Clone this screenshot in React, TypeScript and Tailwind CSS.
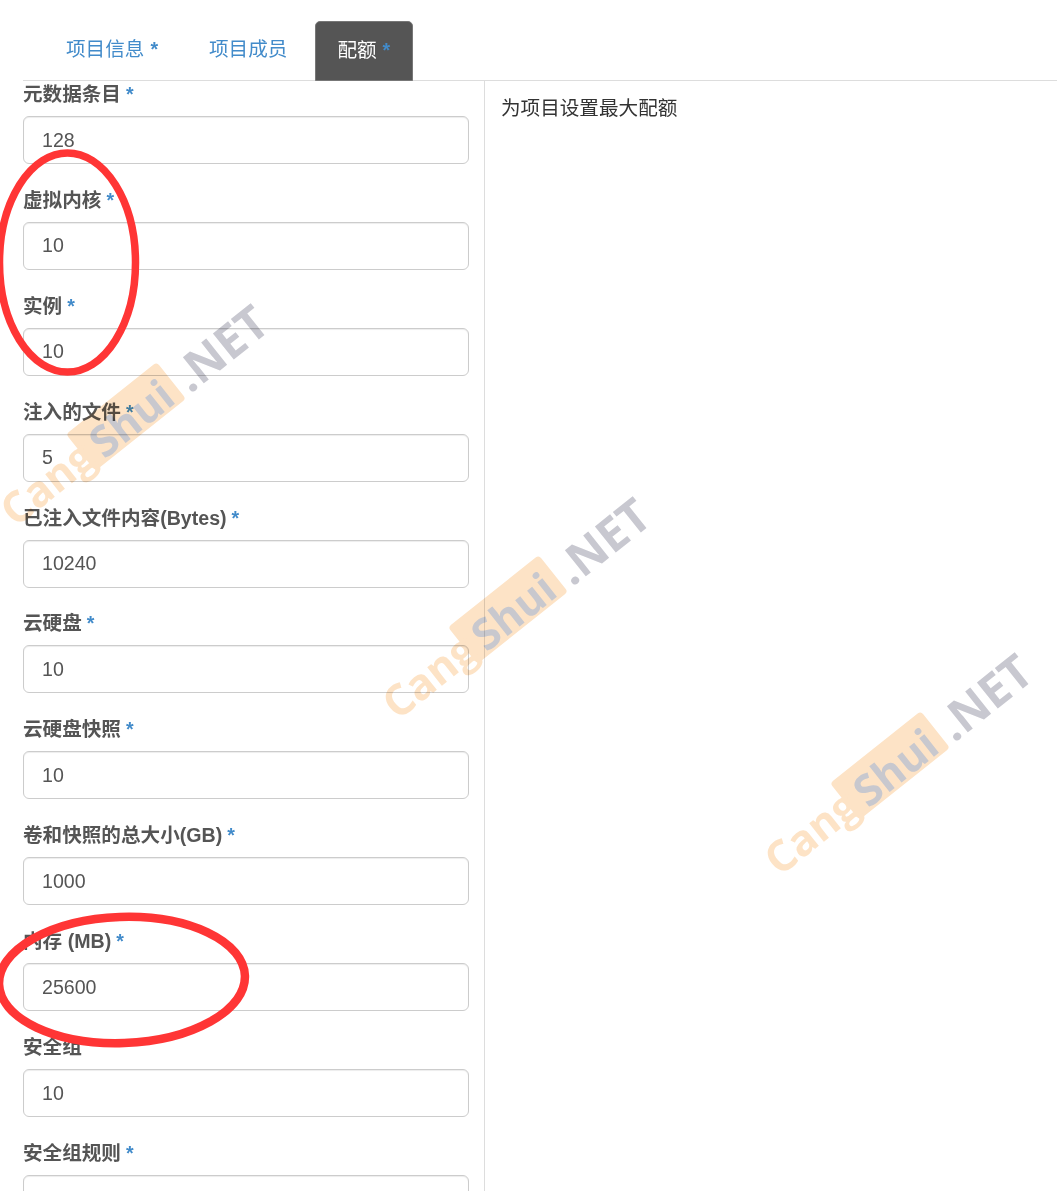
const fields = [
  { label: "元数据条目", value: "128", star: true },
  { label: "虚拟内核", value: "10", star: true },
  { label: "实例", value: "10", star: true },
  { label: "注入的文件", value: "5", star: true },
  { label: "已注入文件内容(Bytes)", value: "10240", star: true },
  { label: "云硬盘", value: "10", star: true },
  { label: "云硬盘快照", value: "10", star: true },
  { label: "卷和快照的总大小(GB)", value: "1000", star: true },
  { label: "内存 (MB)", value: "25600", star: true },
  { label: "安全组", value: "10", star: false },
  { label: "安全组规则", value: "100", star: true },
];

const Star = ({ gap = "ml-[5px]" }: { gap?: string }) => (
  <span className={`${gap} font-bold text-[#428bca]`}>*</span>
);

const Watermark = ({ className }: { className: string }) => (
  <div
    className={`pointer-events-none absolute flex h-[47px] w-[340px] -rotate-[38.5deg] items-center whitespace-nowrap font-['Open_Sans',sans-serif] text-[43px] font-bold mix-blend-multiply ${className}`}
  >
    <span className="flex w-[112px] translate-x-[8px] justify-end pt-[6px] text-[#fde3c6]">Cang</span>
    <span className="flex h-[47px] w-[116px] items-center justify-center rounded-[4px] bg-[#fde3c6] pl-[6px] pt-[10px] text-[#c8c8ce]">Shui</span>
    <span className="w-[112px] pl-[6px] pt-[10px] text-[47px] text-[#c8c8d0]">.NET</span>
  </div>
);

const App: React.FC = () => {
  return (
    <div className="relative h-[1191px] w-[1057px] overflow-hidden bg-white font-['Liberation_Sans','Noto_Sans_CJK_SC',sans-serif] text-[19.6px] text-[#333]">
      {/* tabs */}
      <div className="ml-[23px] flex h-[81px] items-end border-b border-[#ddd] pl-[20px]">
        <a className="mr-[5px] flex h-[60px] items-center px-[23px] text-[#428bca]">
          项目信息<Star gap="ml-[6px]" />
        </a>
        <a className="mr-[5px] flex h-[60px] items-center px-[23px] text-[#428bca]">项目成员</a>
        <a className="-mb-px flex h-[60px] items-center rounded-t-[5px] border border-[#777] bg-[#555] pl-[21px] pr-[22px] text-white">
          配额<Star gap="ml-[6px]" />
        </a>
      </div>

      <div className="flex">
        <div className="w-[485px] border-r border-[#ddd] pl-[23px] pr-[15px]">
          {fields.map((f) => (
            <div key={f.label} className="mb-[22.9px]">
              <label className="mb-[7px] block h-[28px] leading-[26px] font-bold text-[#555]">
                {f.label}
                {f.star && <Star />}
              </label>
              <input
                readOnly
                value={f.value}
                className="block h-[48px] w-[446px] rounded-[6px] border border-[#ccc] bg-white px-[18px] text-[#555] shadow-[inset_0_1px_1px_rgba(0,0,0,0.075)] outline-none"
              />
            </div>
          ))}
        </div>
        <div className="pl-[16px] pt-[13px] leading-[28px]">为项目设置最大配额</div>
      </div>

      <Watermark className="left-[-44px] top-[393px]" />
      <Watermark className="left-[338px] top-[586px]" />
      <Watermark className="left-[720px] top-[742px]" />

      {/* red marker circles drawn over the screenshot */}
      <svg className="absolute left-0 top-0" width="260" height="1060" fill="none" stroke="#ff3535">
        <ellipse cx="67.5" cy="262.5" rx="68" ry="109.5" strokeWidth="7.5" />
        <ellipse cx="122" cy="980" rx="123" ry="63" strokeWidth="8.5" transform="rotate(-2 122 980)" />
      </svg>
    </div>
  );
};

export default App;
